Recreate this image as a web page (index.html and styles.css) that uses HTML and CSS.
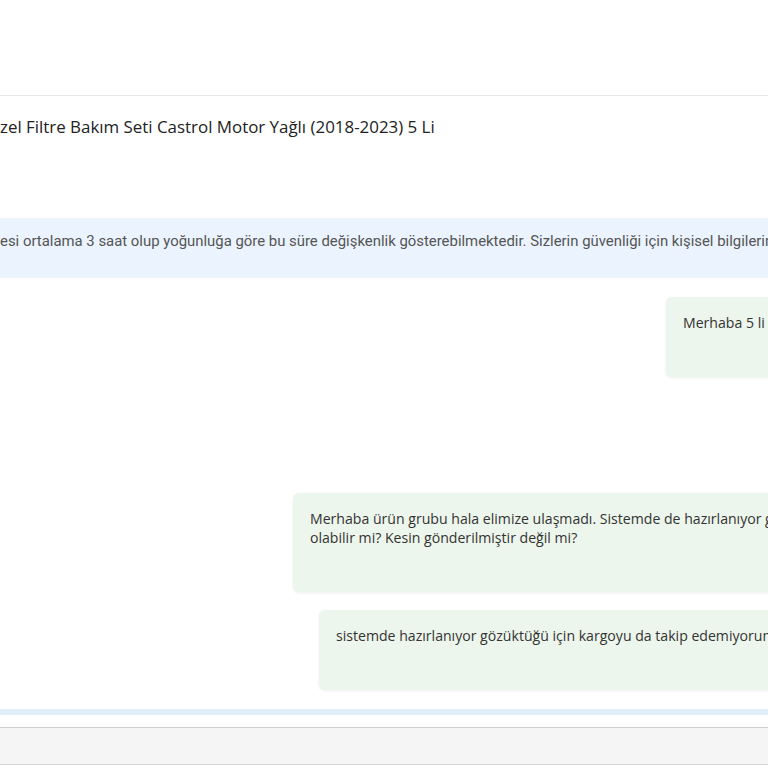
FILE: index.html
```html
<!DOCTYPE html>
<html lang="tr">
<head>
    <meta charset="UTF-8">
    <title>Sipariş Mesajları</title>
    <link rel="stylesheet" href="styles.css">
</head>
<body>

    <div class="topbar"></div>

    <div class="product-title">zel Filtre Bakım Seti Castrol Motor Yağlı (2018-2023) 5 Li</div>

    <div class="notice">esi ortalama 3 saat olup yoğunluğa göre bu süre değişkenlik gösterebilmektedir. Sizlerin güvenliği için kişisel bilgilerinizi paylaşmayınız.</div>

    <div class="messages">
        <div class="bubble b1">Merhaba 5 li set hakkında bilgi alabilir miyim?</div>
        <div class="bubble b2">Merhaba ürün grubu hala elimize ulaşmadı. Sistemde de hazırlanıyor gözüküyor. Ne zaman<br>olabilir mi? Kesin gönderilmiştir değil mi?</div>
        <div class="bubble b3">sistemde hazırlanıyor gözüktüğü için kargoyu da takip edemiyorum</div>
    </div>

    <div class="strip"></div>

    <div class="composer"></div>

</body>
</html>
```

FILE: styles.css
```css
body{
    margin: 0;
    overflow: hidden;
    font-family: 'Open Sans', Lato, sans-serif;
    background: #fff;
}
.topbar{
    height: 95px;
    border-bottom: 1px solid #e8e8e8;
}
.product-title{
    margin-top: 19px;
    font-size: 16.9px;
    line-height: 24px;
    color: #222;
    white-space: nowrap;
}
.notice{
    margin-top: 79px;
    height: 60px;
    box-sizing: border-box;
    padding-top: 13px;
    background: #eaf3fe;
    color: #555;
    font-family: Roboto, sans-serif;
    font-size: 14.9px;
    line-height: 20px;
    white-space: nowrap;
}
.messages{
    padding-top: 19px;
    margin-right: -200px;
}
.bubble{
    box-sizing: border-box;
    padding: 16px 17px 0;
    background: #edf6ec;
    border-radius: 6px;
    box-shadow: 0 1px 3px rgba(0,0,0,0.07);
    color: #333;
    font-size: 14.1px;
    line-height: 19px;
    white-space: nowrap;
    overflow: hidden;
}
.b1{
    margin-left: 666px;
    height: 80px;
}
.b2{
    margin-left: 293px;
    margin-top: 116px;
    height: 99px;
}
.b3{
    margin-left: 319px;
    margin-top: 18px;
    height: 80px;
}
.strip{
    margin-top: 19px;
    height: 6px;
    background: #e4eefa;
}
.composer{
    margin-top: 12px;
    height: 36px;
    background: #f5f5f5;
    border-top: 1px solid #cfcfcf;
    border-bottom: 1px solid #d6d6d6;
}
```
